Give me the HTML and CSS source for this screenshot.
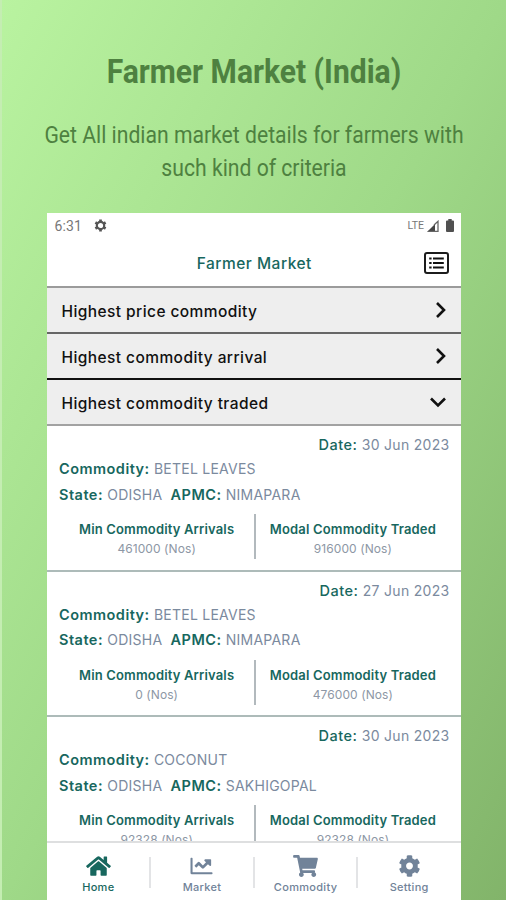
FILE: index.html
```html
<!DOCTYPE html>
<html lang="en">
<head>
<meta charset="utf-8">
<title>Farmer Market (India)</title>
<link rel="stylesheet" href="styles.css">
</head>
<body>
<main class="promo">
  <header class="intro">
    <h1 class="title">Farmer Market (India)</h1>
    <p class="lead">Get All indian market details for farmers with<br>such kind of criteria</p>
  </header>
  <section class="phone">
    <div class="status">
      <span class="clock">6:31</span>
      <svg class="status-gear" viewBox="0 0 24 24"><path fill="none" stroke="#555" stroke-width="4" d="M12 5.2a6.8 6.8 0 1 0 0 13.600a6.8 6.8 0 1 0 0-13.600z"/><path stroke="#555" stroke-width="5" d="M12 1v4M12 19v4M2.500 6.500l3.500 2M18 15.500l3.500 2M2.500 17.500l3.500-2M18 8.500l3.500-2"/></svg>
      <span class="lte">LTE</span>
      <svg class="signal" viewBox="0 0 12 12"><path fill="#444" d="M0 12L8 4V12z"/><path fill="none" stroke="#666" stroke-width="1.300" d="M7 5l4-3.700V11.300H1"/></svg>
      <svg class="battery" viewBox="0 0 8 13"><path fill="#505050" d="M2.300 0h3.400v1.500H7q1 0 1 1V12q0 1-1 1H1q-1 0-1-1V2.500q0-1 1-1h1.300z"/></svg>
    </div>
    <div class="appbar">
      <h2 class="app-title">Farmer Market</h2>
      <svg class="list-icon" viewBox="0 0 25 22"><rect x="1" y="1" width="23" height="20" rx="2" fill="none" stroke="#1c1c1c" stroke-width="2"/><path stroke="#111" stroke-width="2" d="M5.200 6.500h2.400M9 6.500h10.800M5.200 11h2.400M9 11h10.800M5.200 15.500h2.400M9 15.500h10.800"/></svg>
    </div>
    <div class="accordion">
      <div class="acc-row line-mid"><span>Highest price commodity</span><svg class="chev" viewBox="0 0 18 18"><path d="M6 2l7 7-7 7"/></svg></div>
      <div class="acc-row line-dark"><span>Highest commodity arrival</span><svg class="chev" viewBox="0 0 18 18"><path d="M6 2l7 7-7 7"/></svg></div>
      <div class="acc-row line-soft"><span>Highest commodity traded</span><svg class="chev down" viewBox="0 0 18 18"><path d="M2 5.500l7 7 7-7"/></svg></div>
    </div>
    <div class="cards">
      <article class="card">
        <p class="date"><b>Date:</b> 30 Jun 2023</p>
        <p class="line"><b>Commodity:</b> BETEL LEAVES</p>
        <p class="line"><b>State:</b> ODISHA <b class="apmc">APMC:</b> NIMAPARA</p>
        <div class="stats">
          <div class="stat"><b>Min Commodity Arrivals</b><span>461000 (Nos)</span></div>
          <div class="stat"><b>Modal Commodity Traded</b><span>916000 (Nos)</span></div>
        </div>
      </article>
      <article class="card">
        <p class="date"><b>Date:</b> 27 Jun 2023</p>
        <p class="line"><b>Commodity:</b> BETEL LEAVES</p>
        <p class="line"><b>State:</b> ODISHA <b class="apmc">APMC:</b> NIMAPARA</p>
        <div class="stats">
          <div class="stat"><b>Min Commodity Arrivals</b><span>0 (Nos)</span></div>
          <div class="stat"><b>Modal Commodity Traded</b><span>476000 (Nos)</span></div>
        </div>
      </article>
      <article class="card">
        <p class="date"><b>Date:</b> 30 Jun 2023</p>
        <p class="line"><b>Commodity:</b> COCONUT</p>
        <p class="line"><b>State:</b> ODISHA <b class="apmc">APMC:</b> SAKHIGOPAL</p>
        <div class="stats">
          <div class="stat"><b>Min Commodity Arrivals</b><span>92328 (Nos)</span></div>
          <div class="stat"><b>Modal Commodity Traded</b><span>92328 (Nos)</span></div>
        </div>
      </article>
    </div>
    <nav class="tabs">
      <div class="tab active"><svg class="tab-icon" viewBox="0 0 576 512"><path d="M280.400 148.300L96 300.100V464a16 16 0 0 0 16 16h112a16 16 0 0 0 16-16V368a16 16 0 0 1 16-16h64a16 16 0 0 1 16 16v96a16 16 0 0 0 16 16h112a16 16 0 0 0 16-16V300L295.700 148.300a12.200 12.200 0 0 0-15.300 0zM571.600 251.500L488 182.600V44a12 12 0 0 0-12-12h-56a12 12 0 0 0-12 12v72.600L318.500 43a48 48 0 0 0-61 0L4.300 251.500a12 12 0 0 0-1.600 16.900l25.500 31a12 12 0 0 0 16.900 1.600L280.400 107.200a12.200 12.200 0 0 1 15.300 0L530.900 301a12 12 0 0 0 16.900-1.600l25.500-31a12 12 0 0 0-1.700-16.900z"/></svg><span>Home</span></div>
      <div class="tab"><svg class="tab-icon chart" viewBox="0 0 512 512"><path d="M496 400H48V80a16 16 0 0 0-16-16H16A16 16 0 0 0 0 80v336a32 32 0 0 0 32 32h464a16 16 0 0 0 16-16v-16a16 16 0 0 0-16-16zM464 96H345.900c-21.400 0-32.100 25.900-17 41l32.400 32.400L288 242.700l-73.400-73.300a32 32 0 0 0-45.200 0l-68.700 68.700a16 16 0 0 0 0 22.600l22.600 22.600a16 16 0 0 0 22.600 0L192 237.300l73.400 73.300a32 32 0 0 0 45.200 0l96-96L439 247c15.100 15.100 41 4.400 41-17V112a16 16 0 0 0-16-16z"/></svg><span>Market</span></div>
      <div class="tab"><svg class="tab-icon" viewBox="0 0 576 512"><path d="M528.100 301.300l47.300-208C578.800 78.300 567.400 64 552 64H159.200l-9.200-44.800C147.800 8 137.900 0 126.500 0H24C10.700 0 0 10.700 0 24v16c0 13.300 10.700 24 24 24h69.900l70.200 343.400C147.300 417.100 136 435.200 136 456c0 30.900 25.100 56 56 56s56-25.100 56-56c0-15.700-6.400-29.800-16.800-40h209.600C430.400 426.200 424 440.300 424 456c0 30.900 25.100 56 56 56s56-25.100 56-56c0-22.200-12.900-41.300-31.600-50.400l5.500-24.300c3.400-15-8-29.300-23.400-29.300H218.100l-6.500-32h293.100c11.200 0 20.900-7.800 23.400-18.700z"/></svg><span>Commodity</span></div>
      <div class="tab"><svg class="tab-icon" viewBox="0 0 512 512"><path d="M487.400 315.700l-42.600-24.600c4.300-23.200 4.300-47 0-70.200l42.600-24.600c4.900-2.800 7.100-8.600 5.500-14-11.100-35.600-30-67.800-54.700-94.600-3.800-4.100-10-5.100-14.800-2.300L380.800 110c-17.900-15.400-38.500-27.300-60.800-35.100V25.800c0-5.600-3.900-10.500-9.400-11.700-36.700-8.200-74.300-7.800-109.200 0-5.500 1.200-9.400 6.100-9.400 11.700V75c-22.200 7.900-42.800 19.800-60.800 35.100L88.700 85.500c-4.900-2.800-11-1.900-14.800 2.300-24.700 26.700-43.600 58.900-54.700 94.600-1.700 5.400.6 11.200 5.500 14L67.300 221c-4.300 23.200-4.300 47 0 70.200l-42.600 24.600c-4.900 2.800-7.100 8.600-5.500 14 11.100 35.600 30 67.800 54.700 94.600 3.800 4.100 10 5.100 14.800 2.300l42.600-24.600c17.900 15.400 38.500 27.300 60.800 35.100v49.200c0 5.600 3.900 10.500 9.400 11.700 36.700 8.200 74.300 7.800 109.200 0 5.500-1.200 9.400-6.100 9.400-11.700v-49.200c22.200-7.900 42.800-19.800 60.800-35.100l42.600 24.600c4.900 2.800 11 1.900 14.800-2.300 24.700-26.700 43.600-58.900 54.700-94.600 1.500-5.500-.7-11.300-5.600-14.100zM256 336c-44.100 0-80-35.900-80-80s35.900-80 80-80 80 35.900 80 80-35.900 80-80 80z"/></svg><span>Setting</span></div>
    </nav>
  </section>
</main>
</body>
</html>
```
FILE: styles.css
```css
* { box-sizing: border-box; }
body, h1, h2, p { margin: 0; }
body { width: 506px; height: 900px; overflow: hidden; font-family: Inter, "Liberation Sans", sans-serif; }
.promo {
  height: 900px;
  display: flex;
  flex-direction: column;
  border-left: 2px solid #c4edb2;
  background: linear-gradient(to bottom right, #b9f3a0, #9fd988 50%, #82b46a);
}
.intro { height: 213px; padding-top: 51px; text-align: center; color: #4e8140; font-family: Roboto, sans-serif; }
.title { width: 504px; font-size: 34px; line-height: 40px; font-weight: 700; transform: scaleX(.884); white-space: nowrap; }
.lead { margin: 28px -40px 0; font-size: 23.500px; line-height: 33px; transform: scaleX(.9); white-space: nowrap; }
.phone { width: 414.500px; height: 687px; margin-left: 44.500px; display: flex; flex-direction: column; background: #fff; }
.status { height: 25px; padding: 0 7px 0 8px; display: flex; align-items: center; color: #777; font-family: Roboto, sans-serif; }
.clock { font-size: 14px; letter-spacing: .1px; width: 39px; }
.status-gear { width: 13px; height: 13px; }
.lte { margin-left: auto; font-size: 10.500px; }
.signal { width: 12px; height: 12px; margin-left: 3px; }
.battery { width: 8px; height: 13px; margin-left: 7px; }
.appbar { height: 50px; display: grid; grid-template-columns: 1fr auto 1fr; align-items: center; padding-right: 12px; border-bottom: 2px solid #9b9b9b; }
.app-title { grid-column: 2; padding: 2px 0 0 13px; font-size: 15.500px; font-weight: 500; letter-spacing: .5px; color: #17675e; }
.list-icon { justify-self: end; width: 25px; height: 22px; margin-top: 1px; }
.acc-row { height: 46px; padding: 0 12px 0 15px; display: flex; align-items: center; justify-content: space-between; background: #eee; color: #111; font-size: 15.500px; font-weight: 500; letter-spacing: .42px; border-bottom: 2px solid #666; }
.acc-row span { padding-top: 2px; }
.line-dark { border-color: #111; }
.line-soft { border-color: #a2a2a2; }
.chev { width: 18px; height: 18px; fill: none; stroke: #111; stroke-width: 2.600; }
.down { margin-right: 2px; }
.cards { height: 415px; overflow: hidden; }
.card { height: 145.500px; padding: 8px 11.500px 0 12.500px; border-bottom: 2px solid #adbbb9; color: #7b8a9e; }
.card p { font-size: 14px; line-height: 25.500px; letter-spacing: .25px; white-space: nowrap; }
.card b { color: #17675e; font-weight: 600; }
.line b { font-size: 14.500px; letter-spacing: .48px; }
.card .date { line-height: 22px; text-align: right; letter-spacing: .3px; }
.card .date b { font-size: 14.500px; font-weight: 500; letter-spacing: .5px; }
.card .apmc { margin-left: 4px; }
.stats { display: grid; grid-template-columns: 1fr 1fr; height: 43px; margin-top: 7px; }
.stat { display: flex; flex-direction: column; align-items: center; padding-top: 5px; font-size: 12px; line-height: 20px; letter-spacing: .08px; white-space: nowrap; }
.stat span { color: #8d97a5; }
.stat + .stat { border-left: 2px solid #b2b9bd; }
.stat b { font-size: 13px; letter-spacing: .16px; }
.tabs { flex: 1; display: grid; grid-template-columns: repeat(4, 1fr); border-top: 2px solid #dedfe0; background: #fff; }
.tab { position: relative; display: flex; flex-direction: column; align-items: center; padding-top: 12px; color: #718399; font-size: 11px; line-height: 14px; font-weight: 500; letter-spacing: .3px; }
.tab + .tab::before { content: ""; position: absolute; left: -1px; top: 14px; width: 2px; height: 31px; background: #e3e4e6; }
.tab-icon { width: 25px; height: 22px; margin-bottom: 3px; fill: currentColor; }
.active { color: #17675e; }
```
